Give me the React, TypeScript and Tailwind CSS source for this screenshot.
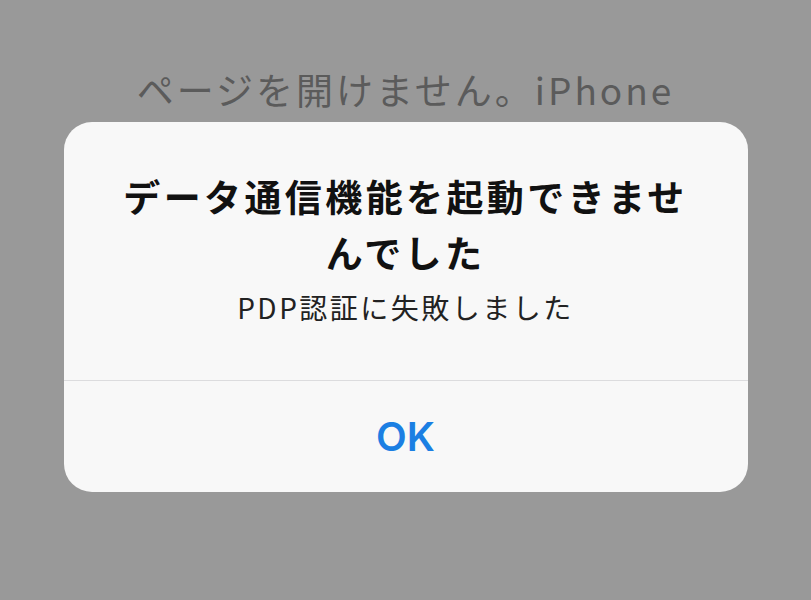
export default function App() {
  return (
    <div
      className="w-[811px] h-[600px] bg-[#999999] flex flex-col items-center overflow-hidden"
      style={{ fontFamily: '"Noto Sans CJK JP", "Noto Sans", sans-serif' }}
    >
      {/* page behind the alert */}
      <p className="mt-[64px] text-[37px] leading-[50px] tracking-[3px] text-[#5b5b5b] whitespace-nowrap">
        ページを開けません。iPhone
      </p>

      {/* alert */}
      <div className="mt-[8px] w-[684px] h-[370px] rounded-[28px] bg-[#f8f8f8] flex flex-col overflow-hidden">
        <div className="h-[258px] flex flex-col items-center pt-[46px]">
          <h1 className="text-[37px] leading-[56px] tracking-[3.4px] font-bold text-[#111111] text-center">
            データ通信機能を起動できませ
            <br />
            んでした
          </h1>
          <p className="mt-[7px] text-[28px] leading-[40px] tracking-[2.5px] text-[#222222]">
            PDP認証に失敗しました
          </p>
        </div>
        <div className="h-px bg-[#dcdcde]" />
        <button
          className="flex-1 flex items-center justify-center text-[40px] font-semibold text-[#1b7fe3]"
          style={{ fontFamily: 'Inter, "Noto Sans", sans-serif' }}
        >
          OK
        </button>
      </div>
    </div>
  )
}
